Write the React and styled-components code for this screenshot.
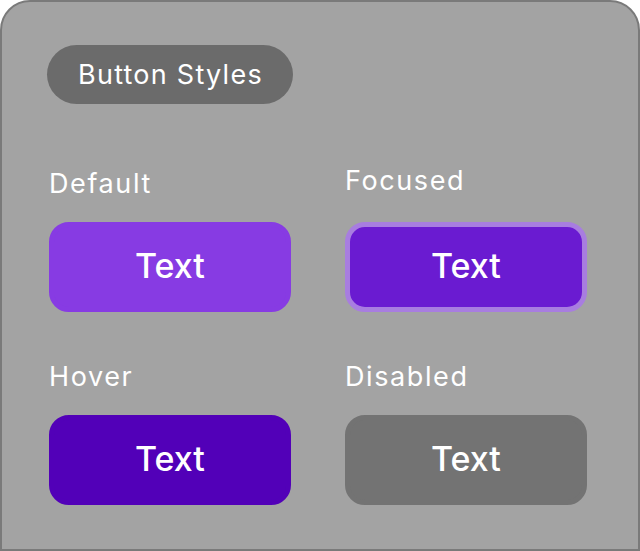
import styled, { createGlobalStyle } from 'styled-components';

const GlobalStyles = createGlobalStyle`
	body {
		margin: 0;
		background: #ffffff;
		font-family: 'Inter', 'Liberation Sans', sans-serif;
	}
`;

const Card = styled.div`
	box-sizing: border-box;
	width: 640px;
	height: 551px;
	background: #a3a3a3;
	border: 2px solid #7a7a7a;
	border-radius: 30px 30px 0 0;
	padding: 43px 0 0 45px;
`;

const Title = styled.div`
	display: inline-flex;
	align-items: center;
	justify-content: center;
	height: 59px;
	padding: 0 30px 0 31px;
	border-radius: 30px;
	background: #6b6b6b;
	color: #ffffff;
	font-size: 27px;
	font-weight: 400;
	letter-spacing: 1.25px;
`;

const Grid = styled.div`
	display: grid;
	grid-template-columns: 242px 242px;
	column-gap: 54px;
	row-gap: 49px;
	margin: 64px 0 0 2px;
`;

const Cell = styled.div`
	display: flex;
	flex-direction: column;
	gap: 22px;
`;

const Label = styled.div`
	font-size: 27px;
	line-height: 32px;
	letter-spacing: 1.6px;
	color: #ffffff;
	margin-top: ${(p) => p.$shift || 0}px;
	margin-bottom: ${(p) => -(p.$shift || 0)}px;
`;

const variants = {
	default: { bg: '#873be3', ring: '#873be3' },
	focused: { bg: '#6a1bd1', ring: '#a87de0' },
	hover: { bg: '#5200b8', ring: '#5200b8' },
	disabled: { bg: '#737373', ring: '#737373' },
};

const Button = styled.button`
	box-sizing: border-box;
	width: 242px;
	height: 90px;
	border-radius: 20px;
	border: 5px solid ${(p) => variants[p.$variant].ring};
	background: ${(p) => variants[p.$variant].bg};
	color: #ffffff;
	font-family: inherit;
	font-size: 34px;
	font-weight: 500;
	padding: 0 0 3px;
	cursor: ${(p) => (p.$variant === 'disabled' ? 'not-allowed' : 'pointer')};
`;

const items = [
	{ label: 'Default', variant: 'default' },
	{ label: 'Focused', variant: 'focused', shift: -3 },
	{ label: 'Hover', variant: 'hover' },
	{ label: 'Disabled', variant: 'disabled' },
];

const App = () => {
	return (
		<>
			<GlobalStyles />
			<Card>
				<Title>Button Styles</Title>
				<Grid>
					{items.map((item) => (
						<Cell key={item.label}>
							<Label $shift={item.shift}>{item.label}</Label>
							<Button $variant={item.variant} disabled={item.variant === 'disabled'}>
								Text
							</Button>
						</Cell>
					))}
				</Grid>
			</Card>
		</>
	);
};

export default App;
